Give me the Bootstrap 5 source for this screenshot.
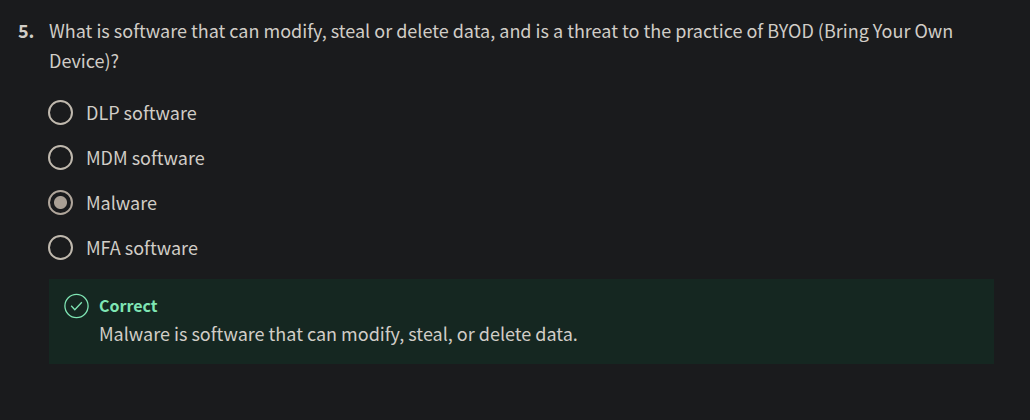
<!DOCTYPE html>
<html lang="en">
<head>
<meta charset="utf-8">
<meta name="viewport" content="width=device-width, initial-scale=1">
<title>Quiz question</title>
<link href="https://cdn.jsdelivr.net/npm/bootstrap@5.3.0/dist/css/bootstrap.min.css" rel="stylesheet">
<script src="https://cdn.jsdelivr.net/npm/bootstrap@5.3.0/dist/js/bootstrap.bundle.min.js" defer></script>
<style>
body{background:#1a1b1d;color:#d1cdc7;font-family:"Noto Sans CJK SC","Noto Sans",sans-serif;font-size:18px;line-height:30px}
.quiz{padding:15px 36px 16px 18px}
.num{width:31px;font-weight:700}
.question{font-size:18px;line-height:30px}
.answers{padding:15px 0 9px}
.answer{height:45px;gap:13px}
.answer label{padding-bottom:2px}
.answer .form-check-input{width:25px;height:25px;margin:0 0 0 -1px;background-color:transparent;border:2px solid #c0b9ae}
.answer .form-check-input:checked{border-color:#b0a69b;background-size:100%;background-image:radial-gradient(circle,#aaa095 6px,transparent 7px)}
.feedback{background:#152721;padding:12px 15px 17px;gap:10px;line-height:28px}
.feedback h2{font-size:16px;line-height:28px;font-weight:700;color:#7fe5b4}
</style>
</head>
<body>
<main class="quiz d-flex">
<div class="num flex-shrink-0">5.</div>
<form class="flex-grow-1">
<fieldset>
<legend class="question m-0">What is software that can modify, steal or delete data, and is a threat to the practice of BYOD (Bring Your Own Device)?</legend>
<div class="answers">
<div class="answer d-flex align-items-center"><input class="form-check-input" type="radio" name="a" id="a1"><label for="a1">DLP software</label></div>
<div class="answer d-flex align-items-center"><input class="form-check-input" type="radio" name="a" id="a2"><label for="a2">MDM software</label></div>
<div class="answer d-flex align-items-center"><input class="form-check-input" type="radio" name="a" id="a3" checked><label for="a3">Malware</label></div>
<div class="answer d-flex align-items-center"><input class="form-check-input" type="radio" name="a" id="a4"><label for="a4">MFA software</label></div>
</div>
</fieldset>
<section class="feedback d-flex"><svg class="flex-shrink-0" width="25" height="30" viewBox="0 0 25 25" fill="none" stroke="#7fe5b4" stroke-width="1.3" aria-hidden="true"><circle cx="12.5" cy="12.5" r="11.6"/><path d="M7.2 12.3l3.6 4 7-7.6"/></svg>
<div><h2 class="m-0">Correct</h2><p class="m-0">Malware is software that can modify, steal, or delete data.</p></div></section>
</form>
</main>
</body>
</html>
